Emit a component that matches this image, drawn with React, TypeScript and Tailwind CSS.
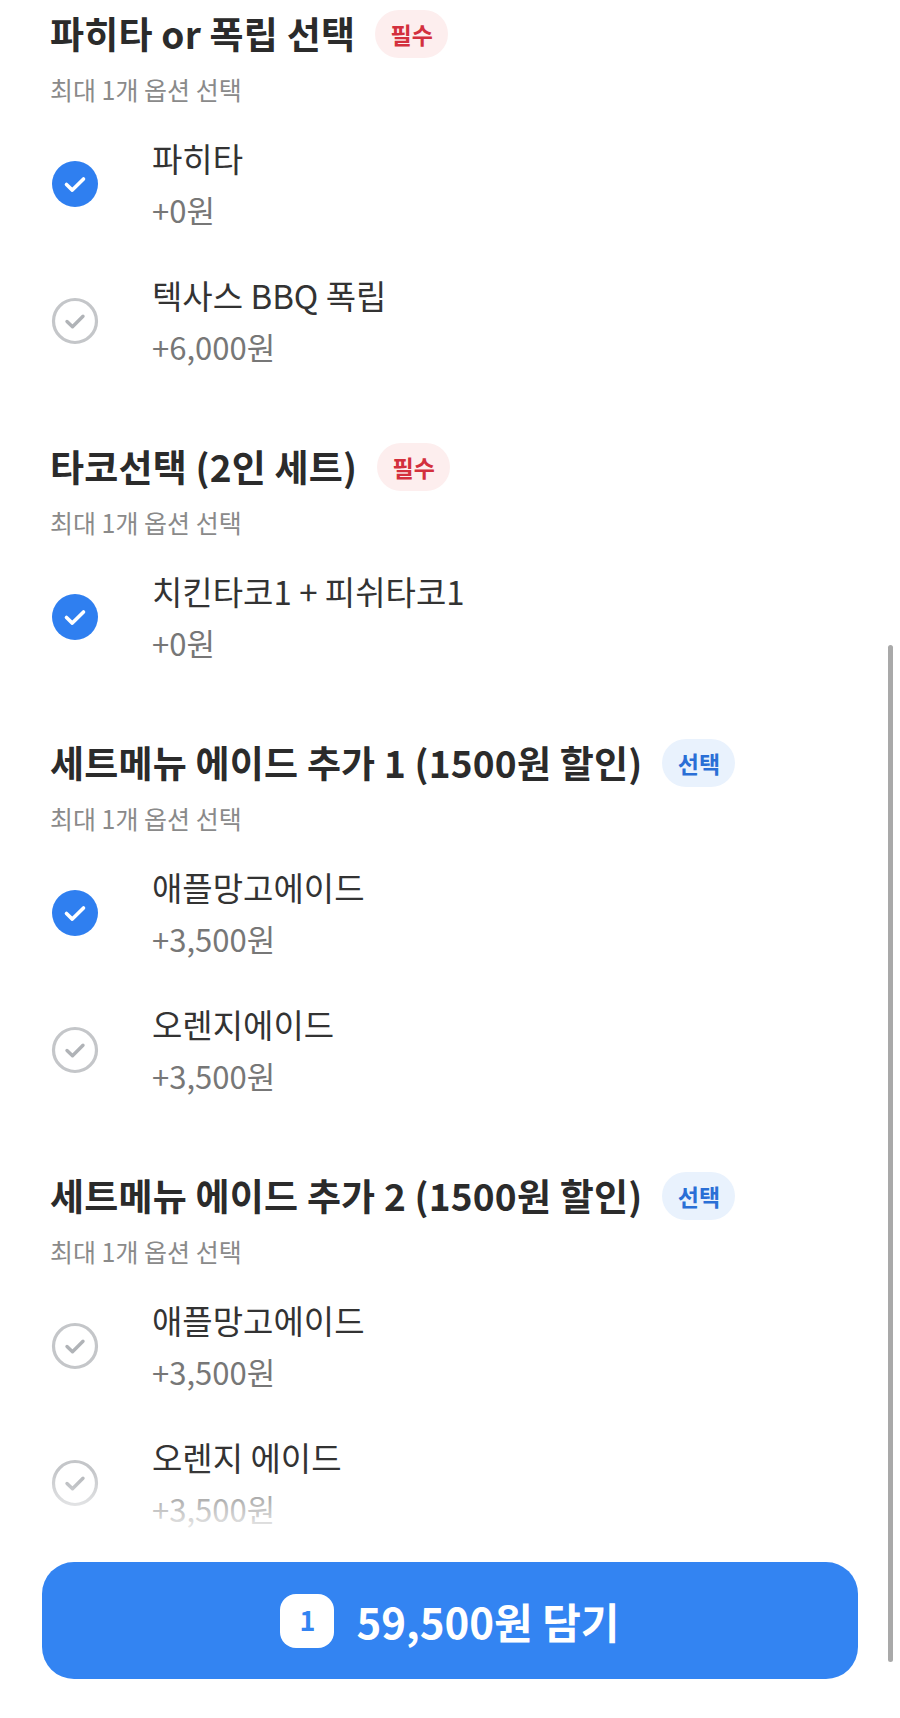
import React from 'react';

type Option = { name: string; price: string; checked?: boolean };
type Group = { title: string; badge: 'required' | 'optional'; options: Option[] };

const groups: Group[] = [
  {
    title: '파히타 or 폭립 선택',
    badge: 'required',
    options: [
      { name: '파히타', price: '+0원', checked: true },
      { name: '텍사스 BBQ 폭립', price: '+6,000원' },
    ],
  },
  {
    title: '타코선택 (2인 세트)',
    badge: 'required',
    options: [{ name: '치킨타코1 + 피쉬타코1', price: '+0원', checked: true }],
  },
  {
    title: '세트메뉴 에이드 추가 1 (1500원 할인)',
    badge: 'optional',
    options: [
      { name: '애플망고에이드', price: '+3,500원', checked: true },
      { name: '오렌지에이드', price: '+3,500원' },
    ],
  },
  {
    title: '세트메뉴 에이드 추가 2 (1500원 할인)',
    badge: 'optional',
    options: [
      { name: '애플망고에이드', price: '+3,500원' },
      { name: '오렌지 에이드', price: '+3,500원' },
    ],
  },
];

const CheckIcon = ({ checked }: { checked?: boolean }) =>
  checked ? (
    <svg width="48" height="48" viewBox="0 0 48 48">
      <circle cx="24" cy="24" r="23" fill="#2f7ff0" />
      <path d="M15.5 24.5l5.8 5.6 11.2-11.2" fill="none" stroke="#fff" strokeWidth="3.6" strokeLinecap="round" strokeLinejoin="round" />
    </svg>
  ) : (
    <svg width="48" height="48" viewBox="0 0 48 48">
      <circle cx="24" cy="24" r="21.5" fill="none" stroke="#c4c6c9" strokeWidth="3.2" />
      <path d="M16 24.5l5.5 5.3 10.5-10.5" fill="none" stroke="#b0b3b7" strokeWidth="3.4" strokeLinecap="round" strokeLinejoin="round" />
    </svg>
  );

const Badge = ({ kind }: { kind: Group['badge'] }) =>
  kind === 'required' ? (
    <span className="ml-5 flex h-12 w-[73px] shrink-0 items-center justify-center rounded-full bg-[#fdeeee] text-[23px] font-bold text-[#d3303d]">
      필수
    </span>
  ) : (
    <span className="ml-5 flex h-12 w-[73px] shrink-0 items-center justify-center rounded-full bg-[#e9f2fd] text-[23px] font-bold text-[#2a6fd6]">
      선택
    </span>
  );

const OptionRow = ({ option }: { option: Option }) => (
  <div className="flex items-center">
    <div className="flex w-[152px] shrink-0 items-center pl-[51px]">
      <CheckIcon checked={option.checked} />
    </div>
    <div className="flex flex-col">
      <span className="text-[33px] leading-[40px] text-[#333]">{option.name}</span>
      <span className="mt-3 text-[31px] leading-[40px] text-[#777]">{option.price}</span>
    </div>
  </div>
);

const GroupSection = ({ group }: { group: Group }) => (
  <section className="flex flex-col">
    <div className="flex h-12 items-center pl-[50px]">
      <h2 className="whitespace-nowrap text-[37px] font-bold tracking-[0.2px] text-[#2b2b2b]">{group.title}</h2>
      <Badge kind={group.badge} />
    </div>
    <p className="mt-4 pl-[50px] text-[25px] leading-[30px] text-[#8a8a8a]">최대 1개 옵션 선택</p>
    <div className="mt-[34px] flex flex-col gap-[45px]">
      {group.options.map((o) => (
        <OptionRow key={o.name} option={o} />
      ))}
    </div>
  </section>
);

export default function App() {
  return (
    <div
      className="relative h-[1718px] w-[900px] overflow-hidden bg-white"
      style={{ fontFamily: '"Noto Sans CJK KR", "Noto Sans", sans-serif' }}
    >
      <div className="flex flex-col gap-[76px] pt-[10px]">
        {groups.map((g) => (
          <GroupSection key={g.title} group={g} />
        ))}
      </div>

      {/* bottom bar */}
      <div className="absolute inset-x-0 bottom-0 flex flex-col">
        <div className="h-[70px] bg-gradient-to-b from-white/0 to-white" />
        <div className="bg-white px-[42px] pb-[39px] pt-[22px]">
          <button className="flex h-[117px] w-full items-center justify-center gap-[22px] rounded-[32px] bg-[#3384f2]">
            <span className="flex h-[54px] w-[54px] items-center justify-center rounded-[16px] bg-white text-[27px] font-bold text-[#3384f2]">
              1
            </span>
            <span className="text-[42px] font-bold text-white">59,500원 담기</span>
          </button>
        </div>
      </div>

      {/* scrollbar */}
      <div className="absolute left-[888px] top-[645px] h-[1017px] w-[5px] rounded-full bg-[#a9a9a9]" />
    </div>
  );
}
